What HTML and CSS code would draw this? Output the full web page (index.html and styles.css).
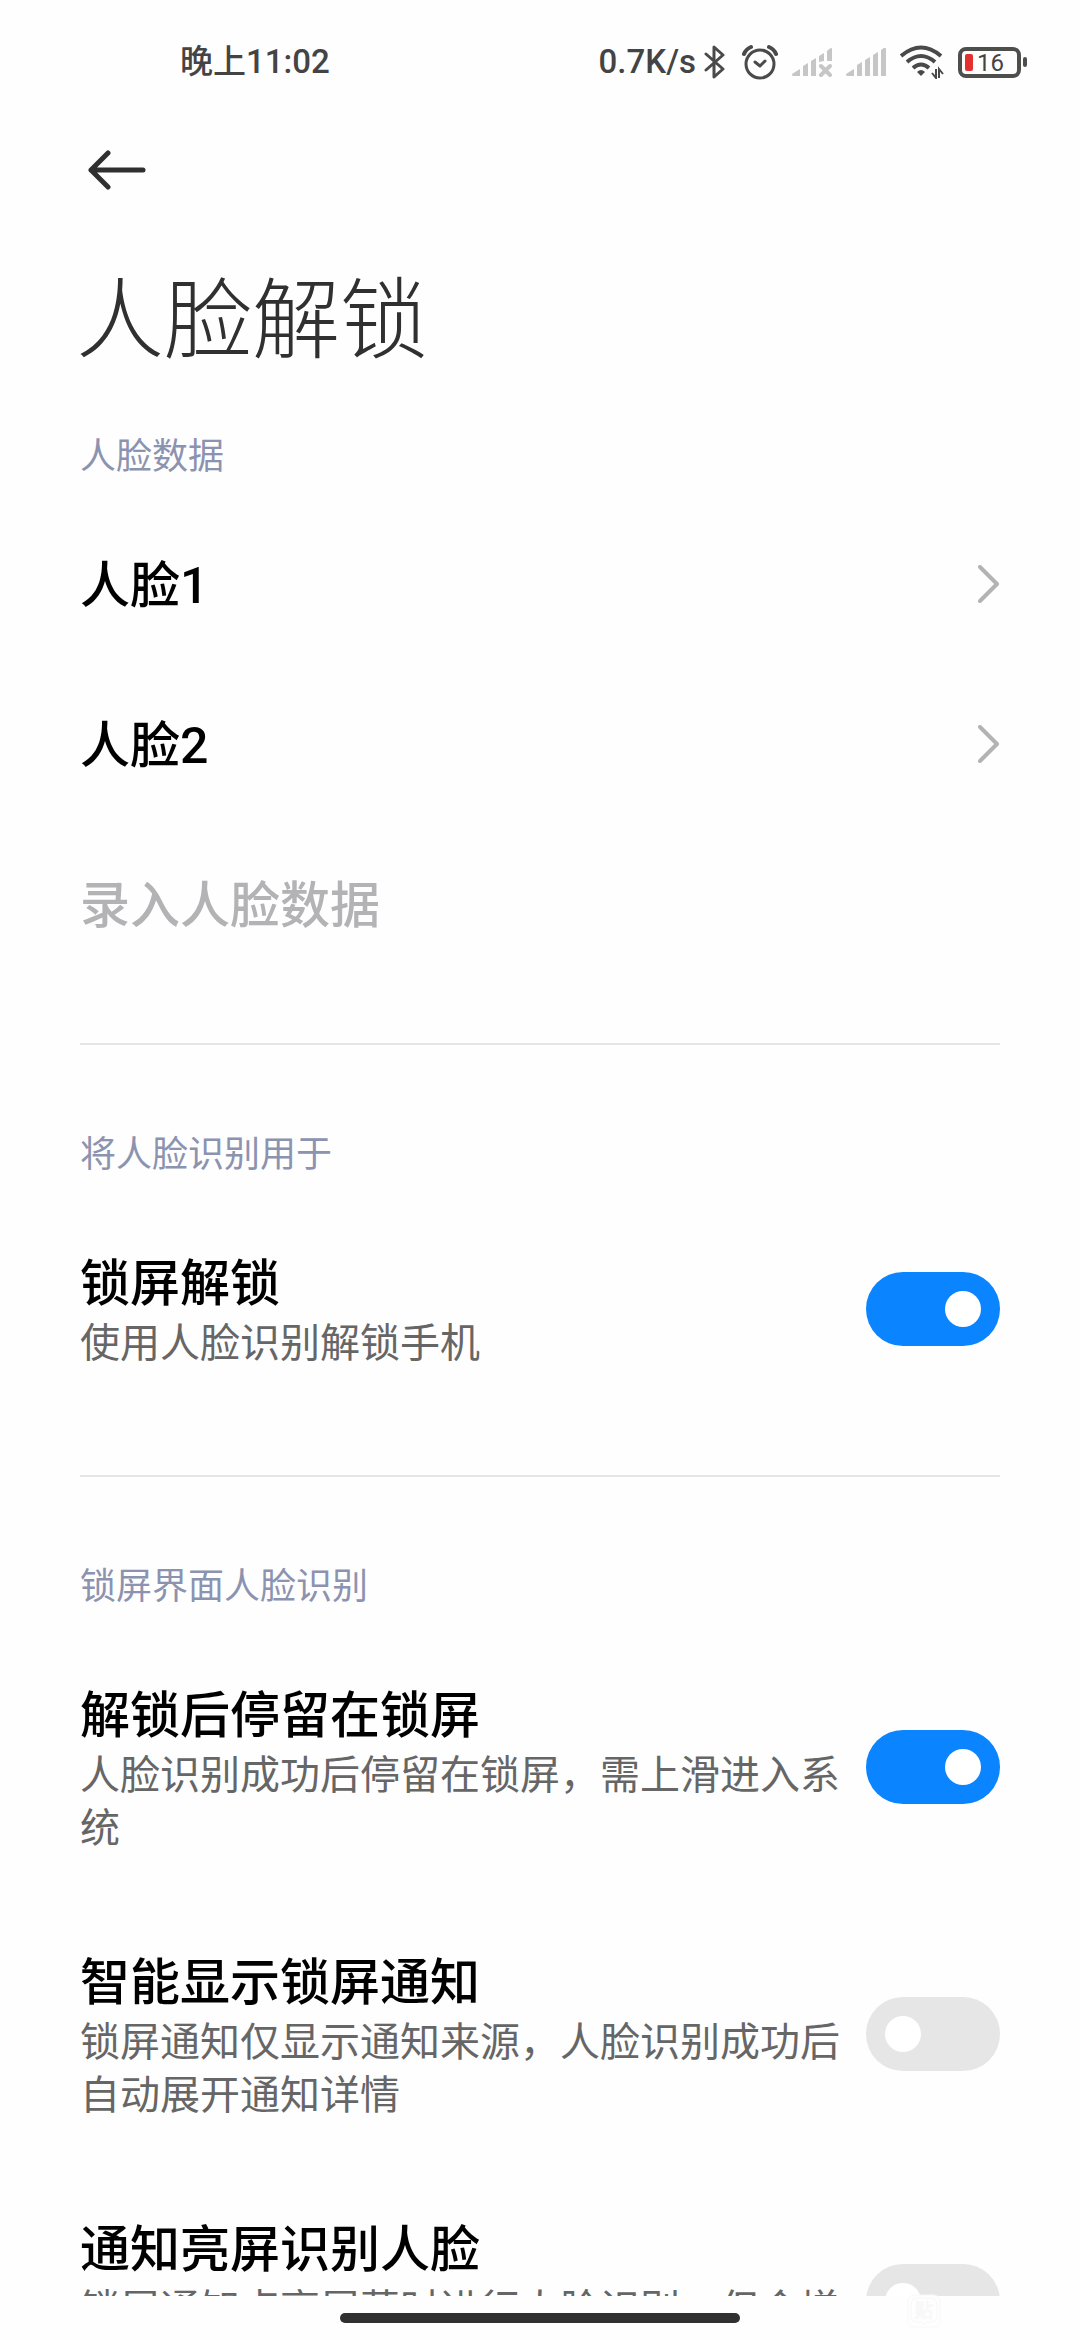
FILE: index.html
```html
<!DOCTYPE html>
<html lang="zh-CN">
<head>
    <meta charset="UTF-8">
    <meta name="viewport" content="width=device-width, initial-scale=1.0">
    <title>人脸解锁</title>
    <link rel="stylesheet" href="styles.css">
</head>
<body>
    <div class="status-bar">
        <span class="status-time">晚上11:02</span>
        <div class="status-icons">
            <span class="net-speed">0.7K/s</span>
            <svg class="icon-bluetooth" width="22" height="36" viewBox="0 0 22 36" fill="none" stroke="#4a4a4a" stroke-width="3" stroke-linejoin="round" stroke-linecap="round">
                <path d="M2 10 L19 25 L10 33 V3 L19 11 L2 26"/>
            </svg>
            <svg class="icon-alarm" width="36" height="36" viewBox="0 0 36 36" fill="none" stroke="#4a4a4a" stroke-width="3" stroke-linecap="round" stroke-linejoin="round">
                <circle cx="18" cy="20" r="14"/>
                <path d="M13 18 L18 22 L23 17"/>
                <path d="M2 10 Q4 5 9 3 M27 3 Q32 5 34 10" stroke-width="4"/>
            </svg>
            <svg class="icon-signal" width="40" height="30" viewBox="0 0 40 30" fill="#c6c6c6">
                <path d="M0 27 L8 22 V29 H1 Q0 29 0 27Z M11 19 L16 16 V29 H11Z M19 14 L24 11 V29 H19Z M27 9 L32 6 V14 L27 15Z M35 4 Q40 -1 40 2 V14 H35Z"/>
                <path d="M29 19 L38 28 M38 19 L29 28" stroke="#c6c6c6" stroke-width="4" stroke-linecap="round"/>
            </svg>
            <svg class="icon-signal" width="40" height="30" viewBox="0 0 40 30" fill="#c6c6c6">
                <path d="M0 27 L8 22 V29 H1 Q0 29 0 27Z M11 18 L16 15 V29 H11Z M19 13 L24 10 V29 H19Z M27 8 L32 5 V29 H27Z M35 3 Q40 -1 40 2 V29 H35Z"/>
            </svg>
            <svg class="icon-wifi" width="44" height="34" viewBox="0 0 44 34" fill="none" stroke="#4a4a4a" stroke-width="4">
                <path d="M1 11 Q21 -6 41 11"/>
                <path d="M7 17 Q21 5 35 17"/>
                <path d="M13 23 Q21 16 29 23"/>
                <path d="M17 27 Q21 23 25 27 L21 31Z" fill="#4a4a4a" stroke="none"/>
                <path d="M36 24 V33 L32 28 M39 33 V24 L43 29" stroke-width="2"/>
            </svg>
            <svg class="icon-battery" width="70" height="32" viewBox="0 0 70 32">
                <rect x="2" y="3" width="59" height="27" rx="6" fill="none" stroke="#4e4f4b" stroke-width="4"/>
                <rect x="65" y="11" width="4" height="10" rx="2" fill="#4e4f4b"/>
                <rect x="7" y="8" width="8" height="17" rx="2" fill="#e53030"/>
                <text x="19" y="25" class="battery-text">16</text>
            </svg>
        </div>
    </div>

    <main>
        <header class="page-header">
            <button type="button" class="back" aria-label="返回">
                <svg width="60" height="40" viewBox="0 0 60 40" fill="none" stroke="#303030" stroke-width="5" stroke-linecap="round" stroke-linejoin="round">
                    <path d="M20 3 L3 20 L20 37 M3 20 H55"/>
                </svg>
            </button>
            <h1>人脸解锁</h1>
        </header>

        <section>
            <h2>人脸数据</h2>
            <a class="row" href="#face1">
                <span class="row-title">人脸1</span>
                <svg class="chevron" width="22" height="38" viewBox="0 0 22 38"><path d="M2 2 L19 19 L2 36"/></svg>
            </a>
            <a class="row" href="#face2">
                <span class="row-title">人脸2</span>
                <svg class="chevron" width="22" height="38" viewBox="0 0 22 38"><path d="M2 2 L19 19 L2 36"/></svg>
            </a>
            <button type="button" class="row" disabled>
                <span class="row-title">录入人脸数据</span>
            </button>
        </section>

        <section>
            <h2>将人脸识别用于</h2>
            <label class="row row-switch" for="unlock">
                <span class="row-text">
                    <span class="row-title">锁屏解锁</span>
                    <span class="row-desc">使用人脸识别解锁手机</span>
                </span>
                <input type="checkbox" id="unlock" class="switch" checked>
            </label>
        </section>

        <section>
            <h2>锁屏界面人脸识别</h2>
            <label class="row row-switch" for="stay">
                <span class="row-text">
                    <span class="row-title">解锁后停留在锁屏</span>
                    <span class="row-desc">人脸识别成功后停留在锁屏，需上滑进入系统</span>
                </span>
                <input type="checkbox" id="stay" class="switch" checked>
            </label>
            <label class="row row-switch" for="smart">
                <span class="row-text">
                    <span class="row-title">智能显示锁屏通知</span>
                    <span class="row-desc">锁屏通知仅显示通知来源，人脸识别成功后自动展开通知详情</span>
                </span>
                <input type="checkbox" id="smart" class="switch">
            </label>
            <label class="row row-switch" for="wake">
                <span class="row-text">
                    <span class="row-title">通知亮屏识别人脸</span>
                    <span class="row-desc">锁屏通知点亮屏幕时进行人脸识别，但会增加耗电</span>
                </span>
                <input type="checkbox" id="wake" class="switch">
            </label>
        </section>
    </main>

    <footer class="nav-bar">
        <div class="home-indicator"></div>
        <svg class="watermark" width="34" height="34" viewBox="0 0 34 34" fill="none" stroke="#f8f8f8">
            <rect x="1" y="1" width="32" height="32" rx="6" fill="#fefefe"/>
            <path d="M11 4 H23 Q30 4 30 11 V21 Q30 28 23 28 H19 L17 31 L15 28 H11 Q4 28 4 21 V11 Q4 4 11 4Z"/>
            <text x="8" y="23" class="watermark-text">贴</text>
        </svg>
    </footer>
</body>
</html>
```

FILE: styles.css
```css
* {
    box-sizing: border-box;
}

body {
    font-family: Roboto, "Noto Sans CJK SC", sans-serif;
    background-color: #fefefe;
    color: #000;
    margin: 0;
    display: flex;
    flex-direction: column;
    height: 100vh;
    overflow: hidden;
}

/* status bar */
.status-bar {
    display: flex;
    justify-content: space-between;
    align-items: center;
    padding: 38px 52px 38px 180px;
    line-height: 48px;
    font-size: 33px;
    font-weight: 500;
    color: #444;
}

.status-icons {
    display: flex;
    align-items: center;
}

.net-speed {
    margin-right: 8px;
}

.icon-bluetooth {
    margin-right: 16px;
}

.icon-alarm {
    margin-right: 14px;
}

.icon-signal,
.icon-wifi {
    margin-right: 14px;
}

.battery-text {
    font-size: 24px;
    font-weight: 400;
    fill: #444;
}

/* content */
main {
    flex: 1;
    min-height: 0;
    overflow: hidden;
    padding: 0 80px;
}

.back {
    display: flex;
    align-items: center;
    height: 92px;
    padding: 0 8px;
    border: none;
    background: none;
}

h1 {
    margin: 45px 0 0 -4px;
    font-size: 88px;
    font-weight: 300;
    line-height: 120px;
    color: #303030;
}

h2 {
    margin: 0;
    padding: 86px 0 23px;
    font-size: 36px;
    font-weight: 400;
    line-height: 48px;
    color: #8c93b0;
}

.page-header + section h2 {
    padding-top: 52px;
}

section + section {
    margin-top: 59px;
    border-top: 2px solid #e6e6e6;
}

.row {
    display: flex;
    justify-content: space-between;
    align-items: center;
    width: 100%;
    min-height: 160px;
    padding: 0;
    border: none;
    background: none;
    font-family: inherit;
    text-align: left;
    text-decoration: none;
    color: #000;
}

.row:disabled {
    color: #b3b2b4;
}

.row-switch {
    padding: 45px 0 46px;
}

.row-text {
    flex: 1;
}

.row-title {
    display: block;
    padding-top: 4px;
    font-size: 50px;
    font-weight: 500;
    line-height: 66px;
}

.row-desc {
    display: block;
    font-size: 40px;
    line-height: 53px;
    color: #666;
}

.chevron {
    fill: none;
    stroke: #b3b3b5;
    stroke-width: 4;
    stroke-linecap: round;
    stroke-linejoin: round;
}

.switch {
    appearance: none;
    display: flex;
    align-items: center;
    flex-shrink: 0;
    width: 134px;
    height: 74px;
    margin: 0 0 0 26px;
    padding: 0 19px;
    border-radius: 37px;
    background-color: #e6e6e6;
}

.switch::before {
    content: "";
    width: 36px;
    height: 36px;
    border-radius: 50%;
    background-color: #fff;
}

.switch:checked {
    justify-content: flex-end;
    background-color: #0a84ff;
}

/* gesture bar */
.nav-bar {
    position: relative;
    display: flex;
    justify-content: center;
    padding: 17px 0;
}

.home-indicator {
    width: 37%;
    height: 10px;
    border-radius: 5px;
    background-color: #303030;
}

.watermark {
    position: absolute;
    right: 139px;
    bottom: 12px;
}

.watermark-text {
    font-size: 18px;
    fill: #fefefe;
}
```
